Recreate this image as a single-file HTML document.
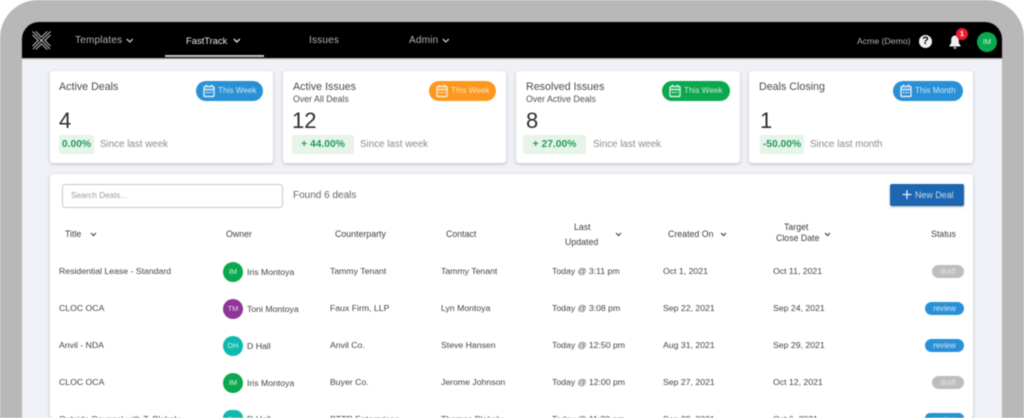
<!DOCTYPE html>
<html><head><meta charset="utf-8"><style>
html,body{margin:0;padding:0;background:#fff;width:1024px;height:418px;overflow:hidden}
#w{position:relative;width:1024px;height:418px;overflow:hidden;background:#fff;font-family:"Liberation Sans",sans-serif;filter:blur(.4px)}
#f{position:absolute;left:0;top:0;width:1024px;height:418px;background:#b8b8b8;border-radius:38px 38px 0 0}
#s{position:absolute;left:22px;top:22px;width:980px;height:396px;background:#eff1f6;border-radius:17px 17px 0 0;overflow:hidden}
#n{position:absolute;left:22px;top:22px;width:980px;height:36px;background:#000;border-radius:17px 17px 0 0;box-shadow:0 1px 1px rgba(0,0,0,.35)}
.c{position:absolute;background:#fff;border-radius:3px;box-shadow:0 1px 3px rgba(0,0,0,.22)}
.t{position:absolute;white-space:nowrap;line-height:14px;height:14px;font-size:8.7px;color:#444}
.nv{font-size:10px;color:#b4b4b4;letter-spacing:.2px}
.h{font-size:10.7px;color:#4a4a4a}
.sub{font-size:8.8px;color:#505050}
.num{font-size:22px;color:#2e2e2e;line-height:24px;height:24px}
.since{font-size:9.8px;color:#8b8b8b}
.g{position:absolute;top:135px;height:19px;background:#e7f4ea;border-radius:2px;color:#1f9d55;font-size:10.3px;font-weight:bold;line-height:19px;text-align:center;white-space:nowrap}
.p{position:absolute;top:81px;height:20px;border-radius:10px;color:#cfe5f4;font-size:8.2px;line-height:20px;white-space:nowrap}
.p svg{position:absolute;left:7px;top:3px}
.p span{position:absolute;left:22px}
.th{font-size:8.8px;color:#3e3e3e;font-weight:normal}
.ab{position:absolute;width:20px;height:20px;border-radius:50%;color:#d8eee0;font-size:7.5px;line-height:20px;text-align:center}
.st{position:absolute;height:13px;border-radius:7px;font-size:7.8px;line-height:13px;text-align:center;color:#e4e4e4;overflow:hidden}
.dr{left:932px;width:32px;background:#bdbdbd}
.rv{left:925px;width:39px;background:#2a90d6;color:#cfe6f5}
.b{height:6px;overflow:hidden}
svg{position:absolute;overflow:visible}
</style></head><body><div id="w">
<div id="f"></div><div id="s"></div><div id="n"></div>

<svg style="left:32px;top:31px" width="19" height="19" viewBox="0 0 20 20" fill="none" stroke="#cfcfcf" stroke-width="1"><path d="M0.5 0.5L19 19M19.500 0.500L1 19M4 0.500L10 6.500L16 0.500M4 19.500L10 13.500L16 19.500M0.500 4L6.500 10L0.500 16M19.500 4L13.500 10L19.500 16"/></svg>

<div class="t nv" style="left:75px;top:34px">Templates</div>
<svg style="left:126px;top:38px" width="8" height="6" fill="none" stroke="#c4c4c4" stroke-width="1.300"><path d="M.8 1L3.800 4L6.800 1"/></svg>
<div class="t nv" style="left:186px;top:34px;color:#e6e6e6;font-size:9.400px;letter-spacing:0">FastTrack</div>
<svg style="left:233px;top:38px" width="8" height="6" fill="none" stroke="#e6e6e6" stroke-width="1.300"><path d="M.8 1L3.800 4L6.800 1"/></svg>
<div style="position:absolute;left:165px;top:55px;width:99px;height:2px;background:#c9c9c9"></div>
<div class="t nv" style="left:309px;top:34px">Issues</div>
<div class="t nv" style="left:409px;top:34px">Admin</div>
<svg style="left:442px;top:38px" width="8" height="6" fill="none" stroke="#c4c4c4" stroke-width="1.300"><path d="M.8 1L3.800 4L6.800 1"/></svg>
<div class="t" style="left:857px;top:34px;color:#b0b0b0;font-size:8.700px">Acme (Demo)</div>
<div style="position:absolute;left:919px;top:35px;width:13px;height:13px;border-radius:50%;background:#f2f2f2;color:#000;font-size:11px;font-weight:bold;line-height:13px;text-align:center">?</div>
<svg style="left:949px;top:35px" width="12" height="14" viewBox="0 0 12 14" fill="#f0f0f0"><path d="M6 0.500C3.500 0.500 2.200 2.500 2.200 5V8L0.500 10.500V11.500H11.500V10.500L9.800 8V5C9.800 2.500 8.500 0.500 6 0.500ZM4.500 12.300H7.500C7.500 13.200 6.800 13.800 6 13.800S4.500 13.200 4.500 12.300Z"/></svg>
<div style="position:absolute;left:956px;top:28px;width:12px;height:12px;border-radius:50%;background:#ec1c2e;color:#fff;font-size:7.500px;font-weight:bold;line-height:12px;text-align:center">1</div>
<div class="ab" style="left:977px;top:32px;background:#0aa84f">IM</div>

<div class="c" style="left:50px;top:71px;width:223px;height:92px"></div>
<div class="c" style="left:283px;top:71px;width:223px;height:92px"></div>
<div class="c" style="left:516px;top:71px;width:224px;height:92px"></div>
<div class="c" style="left:749px;top:71px;width:224px;height:92px"></div>
<div class="c" style="left:50px;top:174px;width:923px;height:244px"></div>

<div class="t h" style="left:59px;top:80px">Active Deals</div>
<div class="t h" style="left:293px;top:80px">Active Issues</div>
<div class="t sub" style="left:293px;top:92px">Over All Deals</div>
<div class="t h" style="left:526px;top:80px">Resolved Issues</div>
<div class="t sub" style="left:526px;top:92px">Over Active Deals</div>
<div class="t h" style="left:759px;top:80px">Deals Closing</div>

<div class="p" style="left:196px;width:67px;background:#2a90d6"><svg width="12" height="14" fill="none" stroke="#dcecf6" stroke-width="1.400"><rect x="1" y="2.500" width="10" height="10" rx="1"/><path d="M1 5.500H11M3.500 .5V3M8.500 .5V3" /><path d="M3 8.500H9" stroke-dasharray="1.500 1"/></svg><span>This Week</span></div>
<div class="p" style="left:429px;width:67px;background:#fd981f;color:#fde0bb"><svg width="12" height="14" fill="none" stroke="#fde9cf" stroke-width="1.400"><rect x="1" y="2.500" width="10" height="10" rx="1"/><path d="M1 5.500H11M3.500 .5V3M8.500 .5V3"/><path d="M3 8.500H9" stroke-dasharray="1.500 1"/></svg><span>This Week</span></div>
<div class="p" style="left:662px;width:68px;background:#0aa84f;color:#c8ead4"><svg width="12" height="14" fill="none" stroke="#d8f0e0" stroke-width="1.400"><rect x="1" y="2.500" width="10" height="10" rx="1"/><path d="M1 5.500H11M3.500 .5V3M8.500 .5V3"/><path d="M3 8.500H9" stroke-dasharray="1.500 1"/></svg><span>This Week</span></div>
<div class="p" style="left:893px;width:70px;background:#2a90d6"><svg width="12" height="14" fill="none" stroke="#dcecf6" stroke-width="1.400"><rect x="1" y="2.500" width="10" height="10" rx="1"/><path d="M1 5.500H11M3.500 .5V3M8.500 .5V3"/><path d="M3 8.500H9" stroke-dasharray="1.500 1"/></svg><span>This Month</span></div>

<div class="t num" style="left:59px;top:109px">4</div>
<div class="t num" style="left:292px;top:109px">12</div>
<div class="t num" style="left:526px;top:109px">8</div>
<div class="t num" style="left:760px;top:109px">1</div>

<div class="g" style="left:59px;width:35px">0.00%</div>
<div class="g" style="left:292px;width:62px">+ 44.00%</div>
<div class="g" style="left:523px;width:63px">+ 27.00%</div>
<div class="g" style="left:760px;width:44px">-50.00%</div>
<div class="t since" style="left:100px;top:138px">Since last week</div>
<div class="t since" style="left:360px;top:138px">Since last week</div>
<div class="t since" style="left:593px;top:138px">Since last week</div>
<div class="t since" style="left:810px;top:138px">Since last month</div>

<div style="position:absolute;left:62px;top:184px;width:219px;height:22px;border:1px solid #c6c6c6;border-radius:3px;background:#fff"></div>
<div class="t" style="left:71px;top:189px;color:#9a9a9a;font-size:8.200px">Search Deals...</div>
<div class="t" style="left:293px;top:189px;font-size:10px;color:#666">Found 6 deals</div>
<div style="position:absolute;left:890px;top:184px;width:74px;height:22px;background:#1c66b2;border-radius:2px;box-shadow:0 1px 2px rgba(0,0,0,.3)"></div>
<svg style="left:902px;top:189px" width="10" height="11" stroke="#e4eef7" stroke-width="1.300"><path d="M5 1V10M.5 5.500H9.500"/></svg>
<div class="t" style="left:915px;top:188px;color:#c9ddef;font-size:8.900px">New Deal</div>

<div class="t th" style="left:65px;top:227px">Title</div>
<svg style="left:90px;top:232px" width="8" height="6" fill="none" stroke="#444" stroke-width="1.200"><path d="M1 1L3.500 3.500L6 1"/></svg>
<div class="t th" style="left:226px;top:227px">Owner</div>
<div class="t th" style="left:335px;top:227px">Counterparty</div>
<div class="t th" style="left:446px;top:227px">Contact</div>
<div class="t th" style="left:574px;top:220px">Last</div>
<div class="t th" style="left:565px;top:235px">Updated</div>
<svg style="left:615px;top:232px" width="8" height="6" fill="none" stroke="#444" stroke-width="1.200"><path d="M1 1L3.500 3.500L6 1"/></svg>
<div class="t th" style="left:668px;top:227px">Created On</div>
<svg style="left:720px;top:232px" width="8" height="6" fill="none" stroke="#444" stroke-width="1.200"><path d="M1 1L3.500 3.500L6 1"/></svg>
<div class="t th" style="left:784px;top:220px">Target</div>
<div class="t th" style="left:776px;top:231px">Close Date</div>
<svg style="left:824px;top:232px" width="8" height="6" fill="none" stroke="#444" stroke-width="1.200"><path d="M1 1L3.500 3.500L6 1"/></svg>
<div class="t th" style="left:931px;top:227px">Status</div>

<div class="t" style="left:59px;top:264px">Residential Lease - Standard</div>
<div class="ab" style="left:223px;top:262px;background:#0aa84f">IM</div>
<div class="t" style="left:247px;top:265px">Iris Montoya</div>
<div class="t" style="left:330px;top:264px">Tammy Tenant</div>
<div class="t" style="left:441px;top:264px">Tammy Tenant</div>
<div class="t" style="left:552px;top:264px">Today @ 3:11 pm</div>
<div class="t" style="left:663px;top:264px">Oct 1, 2021</div>
<div class="t" style="left:773px;top:264px">Oct 11, 2021</div>
<div class="st dr" style="top:265px">draft</div>

<div class="t" style="left:59px;top:301px">CLOC OCA</div>
<div class="ab" style="left:223px;top:299px;background:#8e3598;color:#e6d4ea">TM</div>
<div class="t" style="left:247px;top:302px">Toni Montoya</div>
<div class="t" style="left:330px;top:301px">Faux Firm, LLP</div>
<div class="t" style="left:441px;top:301px">Lyn Montoya</div>
<div class="t" style="left:552px;top:301px">Today @ 3:08 pm</div>
<div class="t" style="left:663px;top:301px">Sep 22, 2021</div>
<div class="t" style="left:773px;top:301px">Sep 24, 2021</div>
<div class="st rv" style="top:302px">review</div>

<div class="t" style="left:59px;top:338px">Anvil - NDA</div>
<div class="ab" style="left:223px;top:336px;background:#0fb9ae;color:#d3f2ef">DH</div>
<div class="t" style="left:247px;top:339px">D Hall</div>
<div class="t" style="left:330px;top:338px">Anvil Co.</div>
<div class="t" style="left:441px;top:338px">Steve Hansen</div>
<div class="t" style="left:552px;top:338px">Today @ 12:50 pm</div>
<div class="t" style="left:663px;top:338px">Aug 31, 2021</div>
<div class="t" style="left:773px;top:338px">Sep 29, 2021</div>
<div class="st rv" style="top:339px">review</div>

<div class="t" style="left:59px;top:375px">CLOC OCA</div>
<div class="ab" style="left:223px;top:373px;background:#0aa84f">IM</div>
<div class="t" style="left:247px;top:376px">Iris Montoya</div>
<div class="t" style="left:330px;top:375px">Buyer Co.</div>
<div class="t" style="left:441px;top:375px">Jerome Johnson</div>
<div class="t" style="left:552px;top:375px">Today @ 12:00 pm</div>
<div class="t" style="left:663px;top:375px">Sep 27, 2021</div>
<div class="t" style="left:773px;top:375px">Oct 12, 2021</div>
<div class="st dr" style="top:376px">draft</div>

<div class="t b" style="left:59px;top:412px">Outside Counsel with T. Blakely</div>
<div class="ab" style="left:223px;top:410px;height:8px;border-radius:10px 10px 0 0;background:#0fb9ae;color:#d3f2ef;overflow:hidden">DH</div>
<div class="t b" style="left:247px;top:412px;height:6px">D Hall</div>
<div class="t b" style="left:330px;top:412px">BTTR Enterprises</div>
<div class="t b" style="left:441px;top:412px">Thomas Blakely</div>
<div class="t b" style="left:552px;top:412px">Today @ 11:20 am</div>
<div class="t b" style="left:663px;top:412px">Sep 29, 2021</div>
<div class="t b" style="left:773px;top:412px">Oct 6, 2021</div>
<div class="st rv" style="top:413px;height:5px;border-radius:7px 7px 0 0">review</div>
</div></body></html>
